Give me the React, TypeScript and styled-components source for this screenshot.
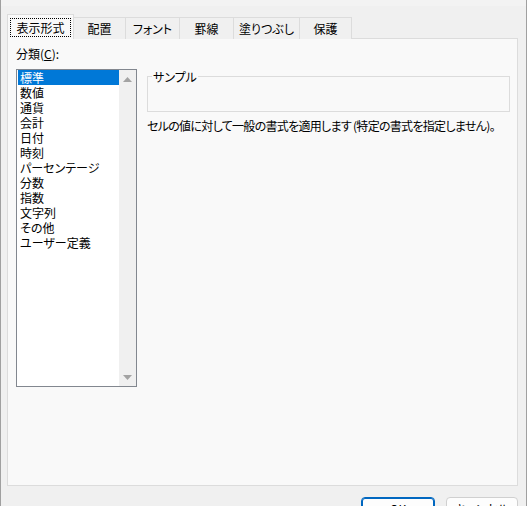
import styled, { createGlobalStyle } from 'styled-components';

const GlobalStyle = createGlobalStyle`
  html, body {
    margin: 0;
    padding: 0;
    background: #f0f0f0;
  }
  body {
    font-family: 'Noto Sans CJK JP', 'Noto Sans', sans-serif;
    font-size: 12px;
    color: #000;
    font-feature-settings: 'palt';
  }
`;

const Window = styled.div`
  box-sizing: border-box;
  height: 506px;
  overflow: hidden;
  padding: 14px 8px 0 6px;
  border-left: 1px solid #a0a0a0;
  border-right: 1px solid #a0a0a0;
  background: linear-gradient(#f3f3f3 0 6px, #f0f0f0 6px);
`;

const TabStrip = styled.div`
  display: flex;
  align-items: flex-end;
  height: 25px;
`;

interface TabProp {
  $width: number;
  $active?: boolean;
}

const Tab = styled.div<TabProp>`
  position: relative;
  z-index: ${(p) => (p.$active ? 1 : 0)};
  box-sizing: border-box;
  width: ${(p) => p.$width}px;
  height: ${(p) => (p.$active ? 25 : 22)}px;
  display: flex;
  align-items: center;
  justify-content: center;
  padding-bottom: ${(p) => (p.$active ? 1 : 0)}px;
  background: ${(p) => (p.$active ? '#f9f9f9' : '#f0f0f0')};
  border: 1px solid #dcdcdc;
  border-bottom: none;
  border-left: ${(p) => (p.$active ? '1px solid #dcdcdc' : 'none')};
  line-height: 17px;
  white-space: nowrap;
`;

const FocusLabel = styled.span`
  border: 1px dotted #000;
  padding: 0 5px;
  margin-top: 1px;
`;

const Panel = styled.div`
  box-sizing: border-box;
  height: 448px;
  margin-top: -1px;
  padding: 7px 0 0 8px;
  background: #f9f9f9;
  border: 1px solid #dcdcdc;
  display: grid;
  grid-template-columns: 121px 363px;
  grid-template-rows: 16px auto;
  column-gap: 10px;
  row-gap: 7px;
  align-content: start;
`;

const FieldLabel = styled.div`
  line-height: 16px;
  grid-column: 1 / 3;
`;

const ListBox = styled.div`
  box-sizing: border-box;
  width: 121px;
  height: 318px;
  border: 1px solid #82878f;
  background: #fff;
  display: flex;
`;

const Items = styled.div`
  flex: 1;
  padding-left: 1px;
`;

const Item = styled.div<{ $selected?: boolean }>`
  height: 15px;
  line-height: 15px;
  padding-left: 2px;
  background: ${(p) => (p.$selected ? '#0078d7' : 'transparent')};
  color: ${(p) => (p.$selected ? '#fff' : '#000')};
  white-space: nowrap;
`;

const ScrollBar = styled.div`
  width: 17px;
  background: #f0f0f0;
  display: flex;
  flex-direction: column;
  justify-content: space-between;
  align-items: center;
  padding: 7px 0 6px;
  box-sizing: border-box;
`;

const RightColumn = styled.div`
  display: flex;
  flex-direction: column;
`;

const SampleBox = styled.fieldset`
  box-sizing: border-box;
  height: 43px;
  margin: 0;
  padding: 0 4px;
  border: 1px solid #dcdcdc;
  min-inline-size: 0;
`;

const SampleLegend = styled.legend`
  padding: 0 1px;
  line-height: 15px;
`;

const Description = styled.div`
  margin-top: 6px;
  line-height: 15px;
  letter-spacing: -0.7px;
  white-space: nowrap;
`;

const Footer = styled.div`
  display: flex;
  justify-content: flex-end;
  gap: 11px;
  margin-top: 11px;
`;

const Button = styled.button<{ $width: number; $primary?: boolean }>`
  box-sizing: border-box;
  width: ${(p) => p.$width}px;
  height: 23px;
  padding: 0;
  font-family: inherit;
  font-size: 12px;
  font-feature-settings: 'palt';
  color: #000;
  background: #fdfdfd;
  border: 1px solid ${(p) => (p.$primary ? '#0067c0' : '#d0d0d0')};
  box-shadow: ${(p) => (p.$primary ? 'inset 0 0 0 1px #0067c0' : 'none')};
  border-radius: 4px;
`;

const Arrow = ({ down }: { down?: boolean }) => (
  <svg width="9" height="5" viewBox="0 0 9 5">
    <path d={down ? 'M0 0H9L4.5 5Z' : 'M4.5 0L9 5H0Z'} fill="#a3a3a3" />
  </svg>
);

const tabs = [
  { name: '表示形式', width: 67 },
  { name: '配置', width: 52 },
  { name: 'フォント', width: 54 },
  { name: '罫線', width: 54 },
  { name: '塗りつぶし', width: 66 },
  { name: '保護', width: 52 },
];

const categories = [
  '標準',
  '数値',
  '通貨',
  '会計',
  '日付',
  '時刻',
  'パーセンテージ',
  '分数',
  '指数',
  '文字列',
  'その他',
  'ユーザー定義',
];

const App = () => {
  return (
    <>
      <GlobalStyle />
      <Window>
        <TabStrip>
          {tabs.map((tab, i) => (
            <Tab key={tab.name} $width={tab.width} $active={i === 0}>
              {i === 0 ? <FocusLabel>{tab.name}</FocusLabel> : tab.name}
            </Tab>
          ))}
        </TabStrip>
        <Panel>
          <FieldLabel>
            分類(<u>C</u>):
          </FieldLabel>
          <ListBox>
            <Items>
              {categories.map((c, i) => (
                <Item key={c} $selected={i === 0}>
                  {c}
                </Item>
              ))}
            </Items>
            <ScrollBar>
              <Arrow />
              <Arrow down />
            </ScrollBar>
          </ListBox>
          <RightColumn>
            <SampleBox>
              <SampleLegend>サンプル</SampleLegend>
            </SampleBox>
            <Description>
              セルの値に対して一般の書式を適用します (特定の書式を指定しません)。
            </Description>
          </RightColumn>
        </Panel>
        <Footer>
          <Button $width={74} $primary>
            OK
          </Button>
          <Button $width={72}>キャンセル</Button>
        </Footer>
      </Window>
    </>
  );
};

export default App;
